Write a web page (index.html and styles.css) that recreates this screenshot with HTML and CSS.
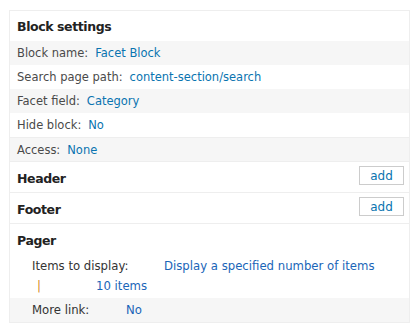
FILE: index.html
```html
<!DOCTYPE html>
<html>
<head>
<meta charset="utf-8">
<link rel="stylesheet" href="styles.css">
</head>
<body>
<div class="panel">
  <div class="title">Block settings</div>
  <div class="row alt"><span class="label">Block name:</span><a class="val">Facet Block</a></div>
  <div class="row"><span class="label">Search page path:</span><a class="val">content-section/search</a></div>
  <div class="row alt"><span class="label">Facet field:</span><a class="val">Category</a></div>
  <div class="row"><span class="label">Hide block:</span><a class="val">No</a></div>
  <div class="row alt line"><span class="label">Access:</span><a class="val">None</a></div>
  <div class="section line"><span class="head">Header</span><button class="add">add</button></div>
  <div class="section line"><span class="head">Footer</span><button class="add">add</button></div>
  <div class="pager">
    <div class="head">Pager</div>
    <div class="prow first"><span class="plabel">Items to display:</span><a class="pval">Display a specified number of items</a></div>
    <div class="prow"><span class="bar">|</span><a class="pval">10 items</a></div>
  </div>
  <div class="prow more"><span class="plabel mlabel">More link:</span><a class="pval">No</a></div>
</div>
</body>
</html>
```
FILE: styles.css
```css
html, body { margin: 0; padding: 0; background: #fff; }
body { font-family: "DejaVu Sans", Verdana, sans-serif; font-size: 11.5px; color: #333; }
.panel { margin: 10px 0 0 9px; width: 399px; border: 1px solid #eee; }
.title { height: 30px; line-height: 32px; padding-left: 7px; font-weight: bold; font-size: 12.5px; letter-spacing: -0.4px; color: #222; }
.row { height: 24px; line-height: 24px; padding-left: 7px; display: flex; gap: 7px; }
.row.alt { background: #f6f6f6; }
.line { border-top: 1px solid #eee; }
.row.line { height: 23px; }
.label { color: #4a4a4a; }
.val { color: #0a74b0; }
.section { height: 30px; display: flex; align-items: flex-start; justify-content: space-between; padding: 0 5px 0 7px; }
.head { font-weight: bold; font-size: 12.5px; letter-spacing: -0.4px; color: #222; line-height: 16px; margin-top: 9px; }
.add { font-family: inherit; font-size: 12px; color: #0a74b0; background: #fff; border: 1px solid #ccc; width: 45px; height: 19px; padding: 0; line-height: 16px; margin-top: 4px; }
.pager { border-top: 1px solid #eee; padding: 9px 0 0 7px; }
.pager .head { display: block; margin-top: 0; }
.prow { display: flex; height: 20px; line-height: 20px; padding-left: 15px; font-size: 11.7px; }
.prow.first { margin-top: 7px; }
.plabel { width: 132px; color: #333; }
.pval { color: #1a65b8; }
.bar { width: 59px; color: #d38a1a; padding-left: 5px; }
.more { background: #f6f6f6; height: 24px; line-height: 24px; padding-left: 22px; margin-top: 2px; }
.mlabel { width: 94px; }
```
